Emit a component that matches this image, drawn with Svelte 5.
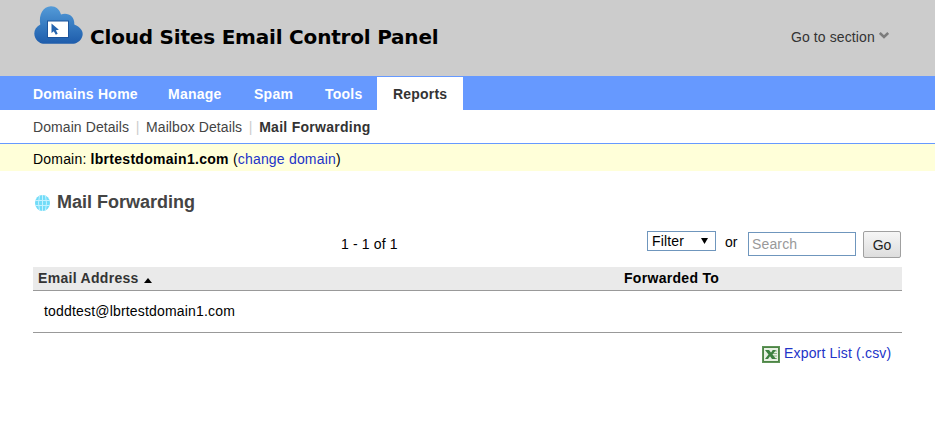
<script>
  const tabs = [
    { label: 'Domains Home', width: 135 },
    { label: 'Manage', width: 86 },
    { label: 'Spam', width: 71 },
    { label: 'Tools', width: 68 },
    { label: 'Reports', width: 86, active: true }
  ];
</script>

<div class="page">
  <header>
    <svg class="cloud" width="49" height="38" viewBox="0 0 49 38">
      <defs>
        <linearGradient id="sky" x1="0" y1="0" x2="0" y2="1">
          <stop offset="0" stop-color="#549bd8" />
          <stop offset=".55" stop-color="#3478bf" />
          <stop offset="1" stop-color="#1e5cab" />
        </linearGradient>
      </defs>
      <path d="M9 37.700C6 37.500.3 34 .3 27.500c0-4 2.200-7 6-9C4.500 9 9 .3 17 .3c5 0 8.700 3.200 10 8.200C33.500 6 41 10 40.300 18.500 44.500 20 48.700 23.500 48.700 28c0 5-4.700 9.500-9.200 9.700z" fill="url(#sky)" />
      <rect x="13.500" y="15" width="21" height="16.500" fill="#fff" stroke="#1d559c" />
      <path d="M17.500 17.500v9.500l2.300-1.800 2 3.500 1.900-1-1.800-3.400 3-.5z" fill="#2464af" />
    </svg>
    <h1>Cloud Sites Email Control Panel</h1>
    <div class="section">Go to section
      <svg width="10" height="7" viewBox="0 0 10 7"><path d="M.8 1l4.200 4 4.200-4" fill="none" stroke="#7c7c7c" stroke-width="2.600" /></svg>
    </div>
  </header>
  <nav>
    {#each tabs as tab}
      <div class="tab" class:active={tab.active} style:width="{tab.width}px">{tab.label}</div>
    {/each}
  </nav>
  <div class="sub">
    <span>Domain Details</span><i>|</i><span>Mailbox Details</span><i>|</i><b>Mail Forwarding</b>
  </div>
  <div class="domain">Domain: <b>lbrtestdomain1.com</b> <span class="paren">(<a href="#change">change domain</a>)</span></div>
  <main>
    <h2>
      <svg width="15" height="16" viewBox="0 0 15 16">
        <ellipse cx="7.500" cy="8" rx="7.500" ry="8" fill="#72dcf8" />
        <path d="M0 5.500h15M0 10.500h15M7.500 0v16M4.500 1Q2.500 8 4.500 15M10.500 1Q12.500 8 10.500 15" fill="none" stroke="#c4f2ff" />
      </svg>
      <span>Mail Forwarding</span>
    </h2>
    <div class="tools">
      <span class="count">1 - 1 of 1</span>
      <div class="select"><span>Filter</span><svg width="7" height="6" viewBox="0 0 7 6"><path d="M0 0h7L3.500 6z" /></svg></div>
      <span class="or">or</span>
      <input placeholder="Search" />
      <button>Go</button>
    </div>
    <div class="head"><span class="email">Email Address <svg width="8" height="5" viewBox="0 0 8 5"><path d="M0 5l4-5 4 5z" /></svg></span><span class="to">Forwarded To</span></div>
    <div class="row">toddtest@lbrtestdomain1.com</div>
    <div class="export">
      <svg width="18" height="17" viewBox="0 0 18 17">
        <rect x=".5" y=".5" width="17" height="16" fill="#4d8546" stroke="#5f9458" />
        <rect x="2" y="2" width="14" height="13" fill="#e8f1e4" />
        <path d="M10 5h5M11 7.500h4M11 10h4M10 12.500h5" stroke="#8eb689" />
        <path d="M3 4h4l2 2.600L11 4h3l-3.500 4.500L14 13h-4l-2-2.700L6 13H3l3.500-4.500z" fill="#3d8140" />
      </svg>
      <a href="#export">Export List (.csv)</a>
    </div>
  </main>
</div>

<style>
  :global(body) { margin: 0; background: #fff; }
  .page { width: 935px; height: 439px; overflow: hidden; background: #fff; color: #000; font: 14px/18px "Liberation Sans", Arial, sans-serif; }
  header { display: flex; height: 76px; box-sizing: border-box; padding-left: 34px; background: #ccc; }
  .cloud { margin-top: 6px; }
  h1 { margin: 25px 0 0 7px; width: 360px; font: bold 20px/24px "DejaVu Sans", Verdana, sans-serif; letter-spacing: -.2px; white-space: nowrap; }
  .section { margin: 28px 0 0 341px; color: #333; letter-spacing: .1px; white-space: nowrap; }
  .section svg { vertical-align: 3px; }
  nav { display: flex; height: 34px; box-sizing: border-box; padding: 1px 0 0 17px; background: #69f; }
  .tab { box-sizing: border-box; height: 33px; padding: 8px 0 0 16px; color: #fff; font-weight: bold; letter-spacing: .25px; white-space: nowrap; }
  .active { background: #fff; color: #333; letter-spacing: .2px; }
  .sub { display: flex; height: 34px; box-sizing: border-box; padding: 8px 0 0 33px; border-bottom: 1px solid #69f; color: #444; letter-spacing: .08px; }
  .sub i { width: 17px; text-align: center; font-style: normal; color: #ccc; }
  .sub b { color: #333; letter-spacing: .27px; }
  .domain { height: 27px; box-sizing: border-box; padding: 6px 0 0 33px; background: #ffffd9; letter-spacing: .19px; }
  .domain b { letter-spacing: .29px; }
  a { color: #2233c8; text-decoration: none; }
  main { padding: 0 33px; }
  h2 { display: flex; align-items: center; margin: 20px 0 0 2px; height: 23px; color: #444; font-size: 18px; line-height: 22px; }
  h2 span { margin: -2px 0 0 7px; }
  .tools { display: flex; align-items: flex-start; height: 53px; box-sizing: border-box; padding-top: 17px; }
  .count { margin: 4px 0 0 308px; width: 306px; letter-spacing: .15px; }
  .select { display: flex; align-items: center; justify-content: space-between; width: 69px; height: 20px; box-sizing: border-box; padding: 0 7px 0 4px; border: 1px solid #6f96bd; letter-spacing: .15px; }
  .or { width: 23px; margin: 2px 0 0 9px; }
  input { width: 108px; height: 24px; box-sizing: border-box; margin: 1px 0 0; padding: 0 3px; border: 1px solid #6f96bd; border-radius: 0; font: inherit; letter-spacing: .15px; }
  input::placeholder { color: #999; opacity: 1; }
  button { width: 38px; height: 27px; margin: 0 0 0 7px; padding: 0; border: 1px solid #a0a0a0; border-radius: 2px; background: linear-gradient(#f6f6f6, #ddd); color: #222; font: inherit; }
  .head { display: flex; box-sizing: border-box; height: 24px; padding: 2px 0 0 5px; background: #eaeaea; border-bottom: 1px solid #999; font-weight: bold; letter-spacing: .3px; }
  .email { width: 586px; color: #333; }
  .email svg { margin-left: 1px; vertical-align: 0; }
  .row { height: 42px; box-sizing: border-box; padding: 11px 0 0 11px; border-bottom: 1px solid #999; letter-spacing: .18px; }
  .export { display: flex; margin: 12px 0 0 729px; }
  .export svg { margin-top: 1px; }
  .export a { margin: -1px 0 0 4px; white-space: nowrap; letter-spacing: .17px; }
</style>
